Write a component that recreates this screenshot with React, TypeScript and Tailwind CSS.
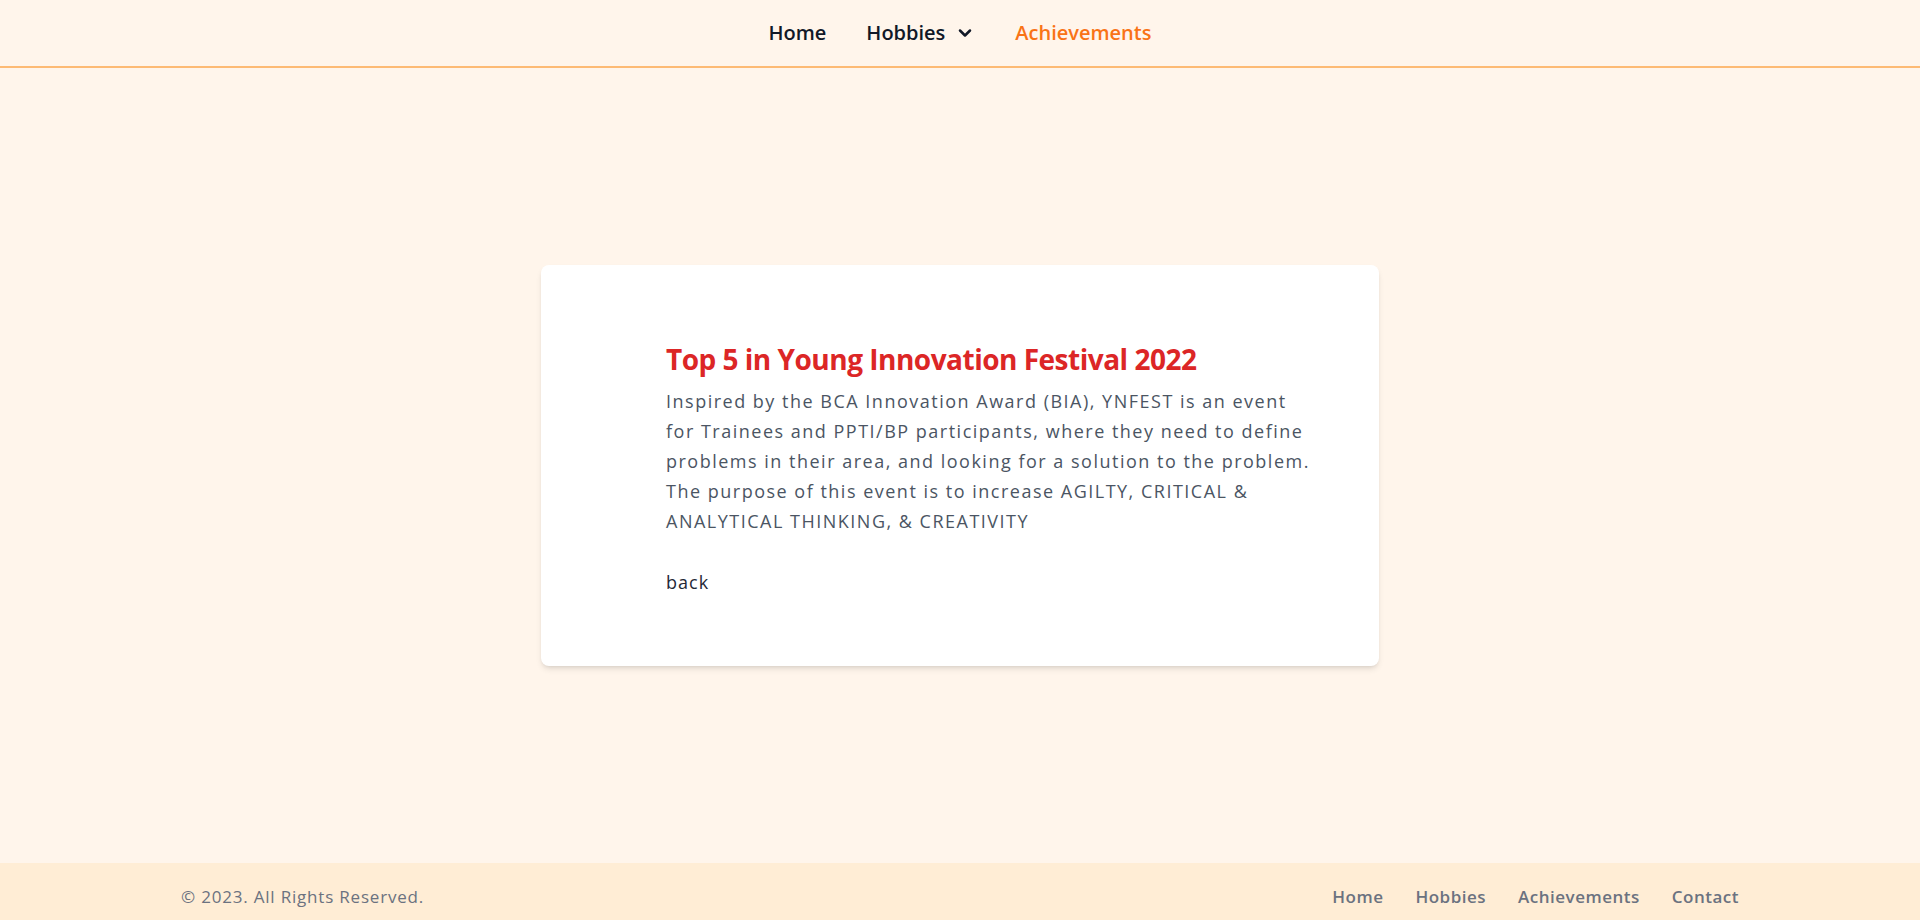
import { ChevronDown } from 'lucide-react';

const footerLinks = ['Home', 'Hobbies', 'Achievements', 'Contact'];

export default function App() {
  return (
    <div className="min-h-screen w-full bg-[#fff5eb] font-['Open_Sans',sans-serif]">
      <header className="h-[68px] border-b-2 border-[#fdba74] flex items-center justify-center">
        <nav className="flex items-center gap-10 text-xl font-semibold text-[#111827]">
          <a href="#">Home</a>
          <button className="flex items-center gap-2.5 font-semibold">
            Hobbies
            <ChevronDown size={20} strokeWidth={3} />
          </button>
          <a href="#" className="text-[#f97316]">Achievements</a>
        </nav>
      </header>

      <main className="h-[795px] flex items-center justify-center">
        <div className="w-[838px] bg-white rounded-lg shadow-md pl-[125px] pr-[50px] pt-[76px] pb-[70px]">
          <h1 className="text-[28px] leading-9 font-bold tracking-[-0.5px] text-[#dc2626] mb-[9px]">
            Top 5 in Young Innovation Festival 2022
          </h1>
          <p className="text-lg leading-[30px] tracking-[1.5px] text-[#4b5563]">
            Inspired by the BCA Innovation Award (BIA), YNFEST is an event
            <br />
            for Trainees and PPTI/BP participants, where they need to define
            <br />
            problems in their area, and looking for a solution to the problem.
            <br />
            The purpose of this event is to increase AGILTY, CRITICAL &amp;
            <br />
            ANALYTICAL THINKING, &amp; CREATIVITY
          </p>
          <a href="#" className="block mt-[32px] text-lg leading-7 tracking-[1px] text-[#1f2937]">
            back
          </a>
        </div>
      </main>

      <footer className="h-[57px] bg-[#ffedd5] px-[181px] pt-5 flex justify-between">
        <p className="text-[17px] leading-7 tracking-[0.8px] text-[#6b7280]">© 2023. All Rights Reserved.</p>
        <div className="flex gap-8 text-[17px] leading-7 font-semibold tracking-[0.5px] text-[#6b7280]">
          {footerLinks.map((l) => (
            <a key={l} href="#">{l}</a>
          ))}
        </div>
      </footer>
    </div>
  );
}
